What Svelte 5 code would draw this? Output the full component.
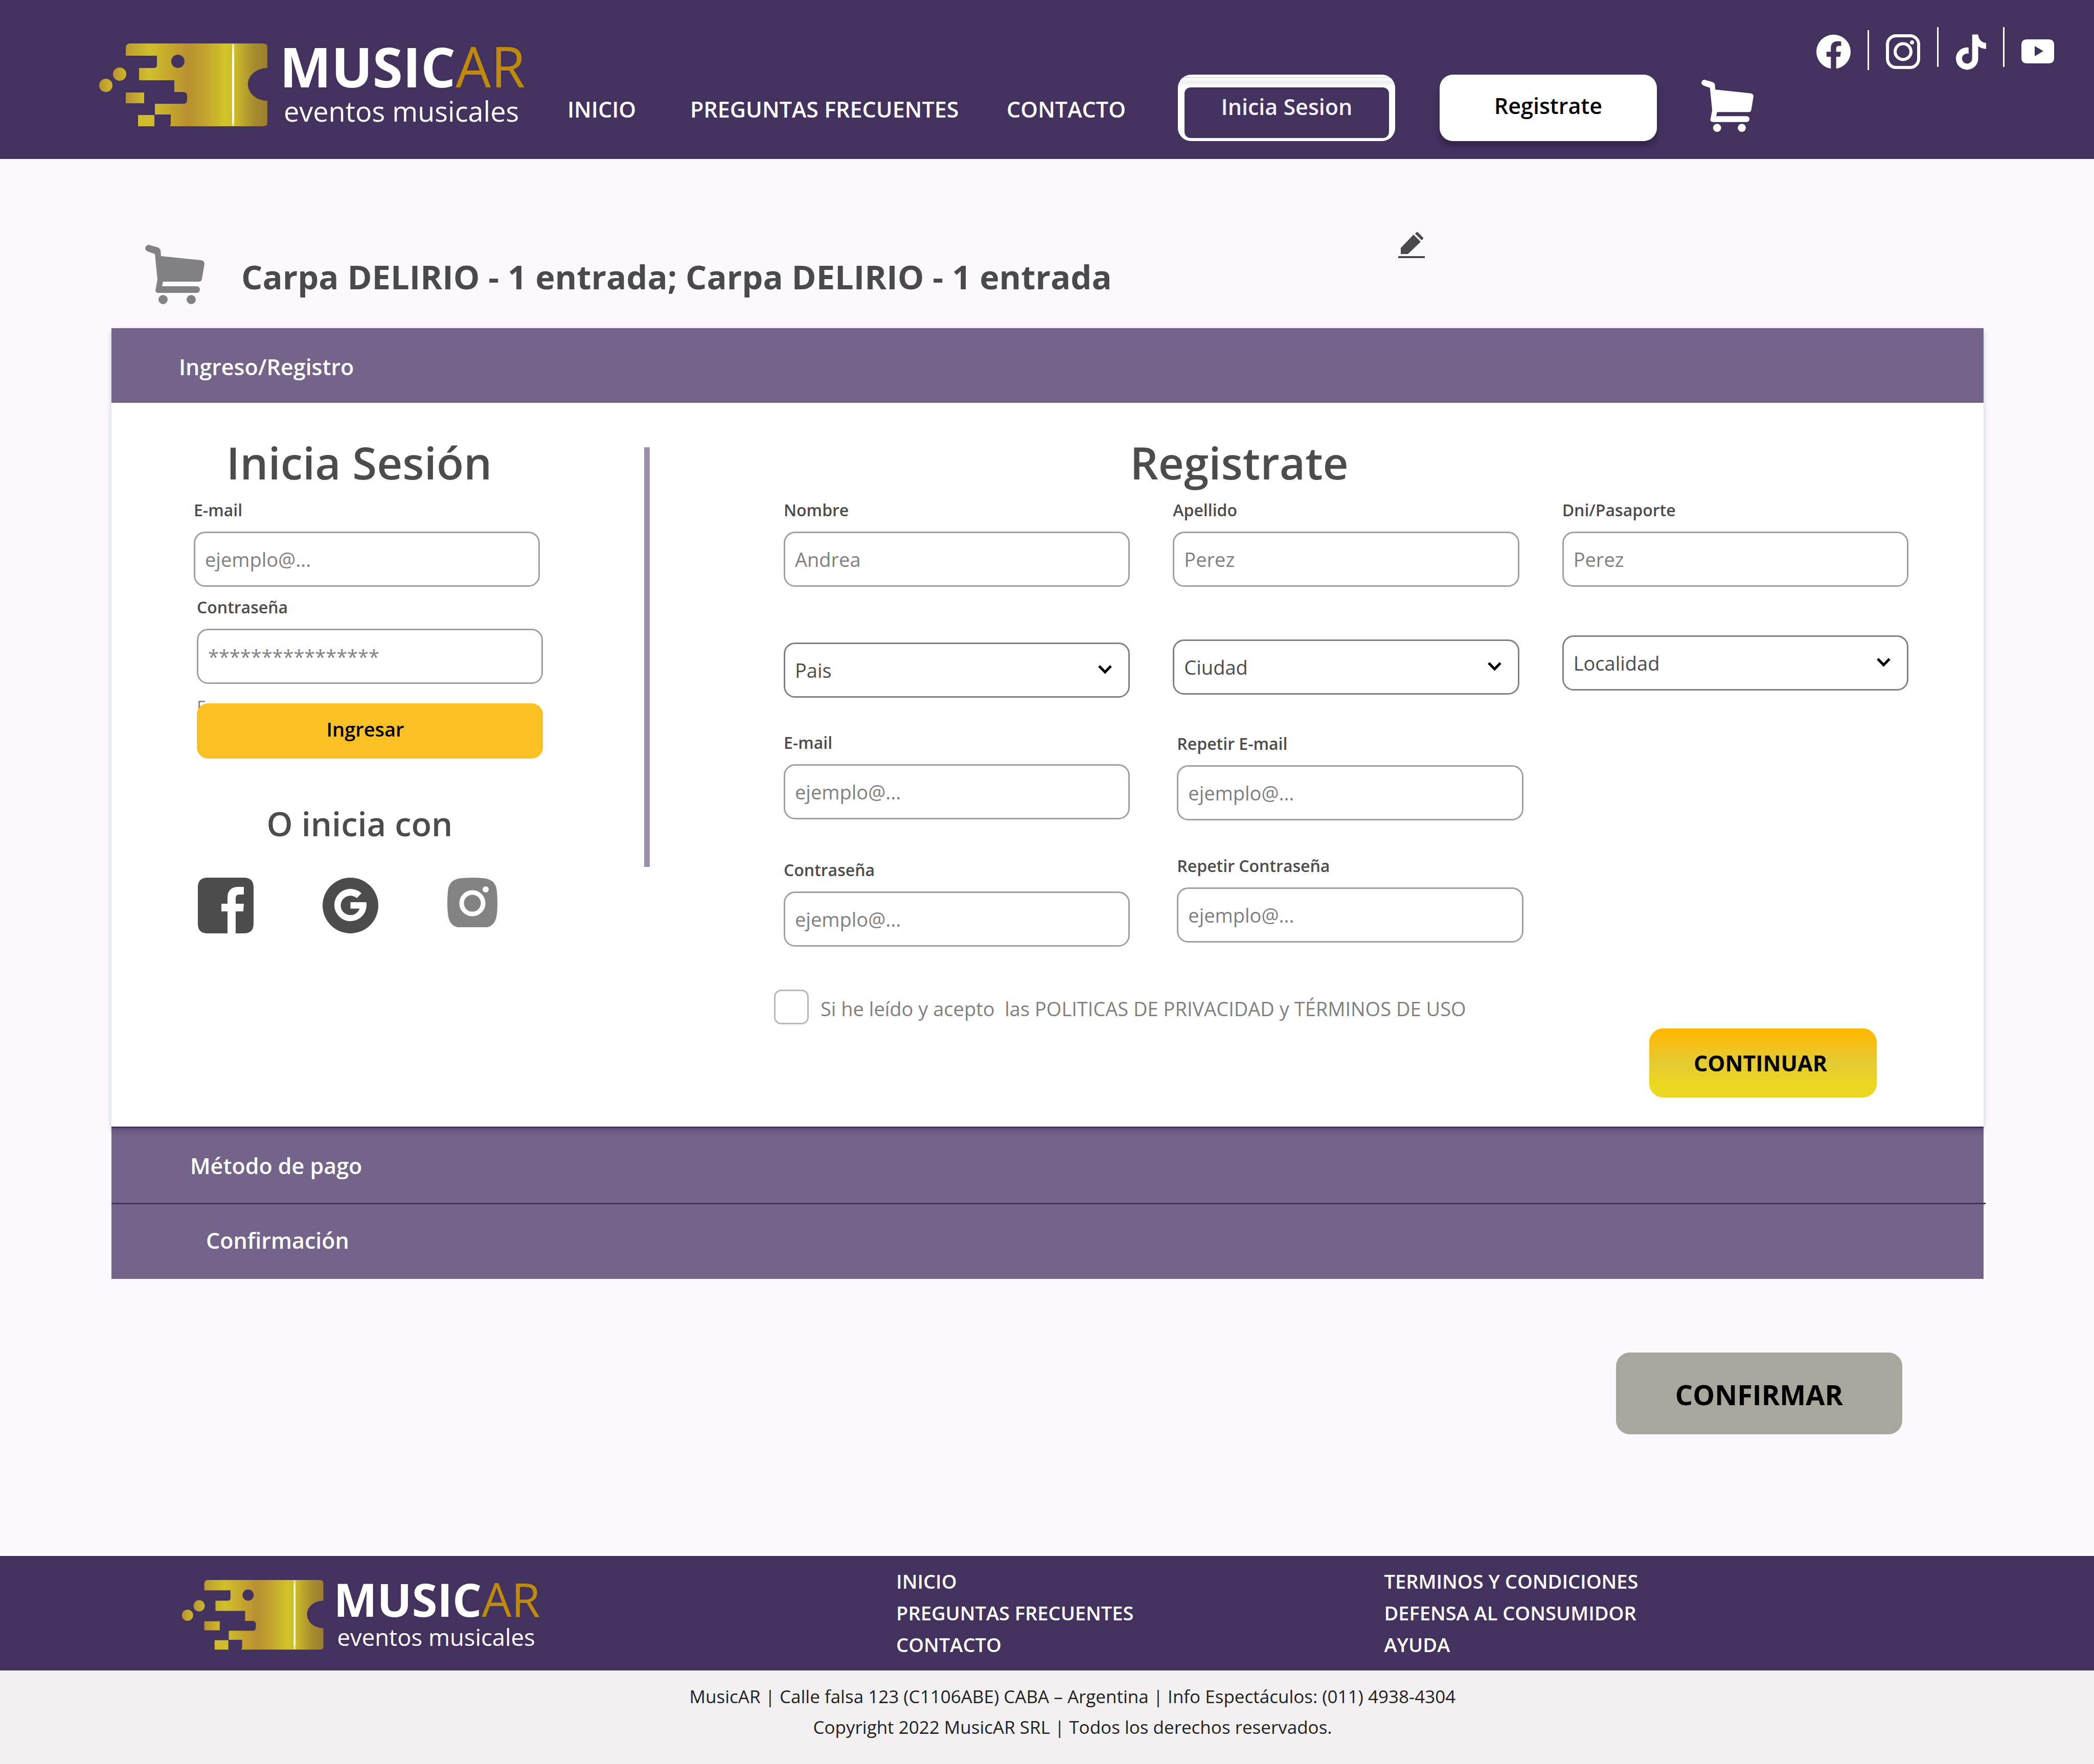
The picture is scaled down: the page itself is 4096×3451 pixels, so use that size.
<script lang="ts">
  const menu = ['INICIO', 'PREGUNTAS FRECUENTES', 'CONTACTO'];
  const legal = ['TERMINOS Y CONDICIONES', 'DEFENSA AL CONSUMIDOR', 'AYUDA'];
</script>

{#snippet logo(id: string)}
  <svg class="logo" viewBox="0 0 850 170" role="img" aria-label="MusicAR eventos musicales">
    <defs>
      <linearGradient id="{id}-gold" gradientUnits="userSpaceOnUse" x1="53" y1="0" x2="330" y2="0">
        <stop offset="0" stop-color="#bb9a30" />
        <stop offset="0.17" stop-color="#d0c02c" />
        <stop offset="0.3" stop-color="#c6a92d" />
        <stop offset="0.44" stop-color="#b89030" />
        <stop offset="0.56" stop-color="#c2a42e" />
        <stop offset="0.7" stop-color="#d2c42a" />
        <stop offset="0.77" stop-color="#ccbc2b" />
        <stop offset="0.9" stop-color="#a88e2e" />
        <stop offset="1" stop-color="#9a7d2e" />
      </linearGradient>
      <linearGradient id="{id}-bit" x1="0" y1="0" x2="1" y2="0">
        <stop offset="0" stop-color="#b8912f" />
        <stop offset="1" stop-color="#cdb92c" />
      </linearGradient>
      <linearGradient id="{id}-line" x1="0" y1="0" x2="0" y2="1">
        <stop offset="0" stop-color="#fff" stop-opacity="0.6" />
        <stop offset="0.15" stop-color="#fff" />
        <stop offset="0.9" stop-color="#fff" />
        <stop offset="1" stop-color="#fff" stop-opacity="0.6" />
      </linearGradient>
    </defs>
    <path
      fill="url(#{id}-gold)"
      fill-rule="evenodd"
      d="M62 0H322Q330 0 330 8V48C309 48 292 62 292 80S309 112 330 112V155Q330 162 322 162H139Q141 160 141 157V139H110V118H166Q173 118 173 110V103Q173 95 165 95H148V72H79V48H108Q114 48 114 42V24H53V9Q53 0 62 0ZM155 22A13 13 0 1 0 155 48A13 13 0 1 0 155 22Z"
    />
    <circle cx="41" cy="60" r="13" fill="url(#{id}-bit)" />
    <circle cx="14" cy="82" r="13" fill="url(#{id}-bit)" />
    <rect x="53" y="96" width="36" height="21" fill="url(#{id}-bit)" />
    <rect x="77" y="140" width="32" height="22" fill="#d0bb2c" />
    <rect x="261" y="1" width="4" height="160" fill="url(#{id}-line)" />
    <text class="brand" x="354" y="86">MUSIC<tspan class="brand-ar">AR</tspan></text>
    <text class="tagline" x="362" y="153">eventos musicales</text>
  </svg>
{/snippet}

{#snippet cart()}
  <svg class="cart" viewBox="0 0 116 117" aria-hidden="true">
    <path
      fill="currentColor"
      d="M7 0L25 5Q29 7 30 10L31 22L109 30Q116 31 116 37L111 67Q110 72 105 72H35L33 81H101Q107 82 107 87Q107 93 101 94H26Q20 94 20 89L24 68L19 18L5 13Q0 11 0 6Q2 0 7 0Z"
    />
    <circle cx="35" cy="107" r="9" fill="currentColor" />
    <circle cx="90" cy="107" r="9" fill="currentColor" />
  </svg>
{/snippet}

{#snippet field(id: string, label: string, placeholder: string, type = 'text')}
  <div class="field">
    <label for={id}>{label}</label>
    <input {id} {type} {placeholder} />
  </div>
{/snippet}

{#snippet picker(label: string)}
  <div class="picker">
    <select aria-label={label}>
      <option>{label}</option>
    </select>
    <svg class="chevron" viewBox="0 0 27 18" aria-hidden="true">
      <path d="M2 2L13.500 14L25 2" fill="none" stroke="#000" stroke-width="5" />
    </svg>
  </div>
{/snippet}

<div class="page">
  <header class="top">
    <a class="home" href="#inicio">{@render logo('head')}</a>
    <nav class="menu">
      {#each menu as item}
        <a href="#{item}">{item}</a>
      {/each}
    </nav>
    <div class="account">
      <button class="signin" type="button"><span>Inicia Sesion</span></button>
      <button class="signup" type="button">Registrate</button>
    </div>
    <a class="cart-link" href="#carrito" aria-label="Carrito">{@render cart()}</a>
    <div class="social">
      <a href="#facebook" aria-label="Facebook">
        <svg width="67" height="68" viewBox="2 2 20 20">
          <path
            fill="#fff"
            d="M12 2.040C6.500 2.040 2 6.530 2 12.060C2 17.060 5.660 21.210 10.440 21.960V14.960H7.900V12.060H10.440V9.850C10.440 7.340 11.930 5.960 14.220 5.960C15.310 5.960 16.450 6.150 16.450 6.150V8.620H15.190C13.950 8.620 13.560 9.390 13.560 10.160V12.060H16.340L15.890 14.960H13.560V21.960A10 10 0 0 0 22 12.060C22 6.530 17.500 2.040 12 2.040Z"
          />
        </svg>
      </a>
      <i class="rule low"></i>
      <a href="#instagram" aria-label="Instagram">
        <svg width="67" height="68" viewBox="0 0 67 68">
          <rect x="3" y="3" width="61" height="62" rx="17" fill="none" stroke="#fff" stroke-width="6" />
          <circle cx="33.500" cy="34" r="15.500" fill="none" stroke="#fff" stroke-width="6" />
          <circle cx="51" cy="16" r="4" fill="#fff" />
        </svg>
      </a>
      <i class="rule"></i>
      <a href="#tiktok" aria-label="TikTok">
        <svg width="60" height="70" viewBox="3.900 3 15.700 18">
          <path
            fill="#fff"
            d="M16.600 5.820A4.278 4.278 0 0 1 15.540 3h-3.090v12.400a2.592 2.592 0 0 1-2.590 2.500c-1.420 0-2.600-1.160-2.600-2.600 0-1.720 1.660-3.010 3.370-2.480V9.660c-3.450-.46-6.470 2.220-6.470 5.640 0 3.330 2.760 5.700 5.690 5.700 3.140 0 5.690-2.550 5.690-5.700V9.010a7.350 7.350 0 0 0 4.300 1.380V7.300s-1.880.09-3.240-1.480z"
          />
        </svg>
      </a>
      <i class="rule"></i>
      <a href="#youtube" aria-label="YouTube">
        <svg width="64" height="68" viewBox="0 0 64 68">
          <path
            fill="#fff"
            fill-rule="evenodd"
            d="M11 10H53Q64 10 64 21V46Q64 57 53 57H11Q0 57 0 46V21Q0 10 11 10ZM26 23V43L43 33Z"
          />
        </svg>
      </a>
    </div>
  </header>

  <main>
    <div class="order">
      {@render cart()}
      <h1>Carpa DELIRIO - 1 entrada; Carpa DELIRIO - 1 entrada</h1>
      <button class="edit" type="button" aria-label="Editar">
        <svg width="52" height="52" viewBox="0 0 52 52">
          <path fill="#4a4a4d" d="M5 31L30 5L44 19L19 43H5ZM33 3L35 1Q37-1 39 1L48 10Q50 12 48 14L46 16Z" />
          <rect x="0" y="47" width="52" height="4" fill="#4a4a4d" />
        </svg>
      </button>
    </div>

    <section class="steps">
      <h2 class="step current">Ingreso/Registro</h2>
      <div class="panel">
        <form class="login">
          <h3>Inicia Sesión</h3>
          {@render field('login-mail', 'E-mail', 'ejemplo@...', 'email')}
          <div class="secret">
            {@render field('login-pass', 'Contraseña', '****************', 'password')}
            <span class="hint">E</span>
            <button class="enter" type="button">Ingresar</button>
          </div>
          <h4>O inicia con</h4>
          <div class="providers">
            <a href="#con-facebook" aria-label="Facebook">
              <svg width="109" height="109" viewBox="0 0 109 109">
                <path
                  fill="#4c4c4c"
                  d="M19 0H90Q109 0 109 19V90Q109 109 90 109H74V66H89L90 51H74V40Q74 33 81 33H90V18Q86 18 80 18Q58 18 58 39V51H46V66H58V109H19Q0 109 0 90V19Q0 0 19 0Z"
                />
              </svg>
            </a>
            <a href="#con-google" aria-label="Google">
              <svg width="109" height="109" viewBox="0 0 109 109">
                <circle cx="54.500" cy="54.500" r="54.500" fill="#4c4c4c" />
                <path
                  fill="#fff"
                  d="M67 40L76 30.500A31.500 31.500 0 1 0 85.500 48H54.500V60.500H72.500A19 19 0 1 1 67 40Z"
                />
              </svg>
            </a>
            <a href="#con-instagram" aria-label="Instagram">
              <svg width="98" height="98" viewBox="0 0 98 98">
                <path
                  fill="#838383"
                  d="M28 1Q49-1 70 1Q96 3 97 28Q99 49 97 70Q95 93 78 97H20Q3 93 1 70Q-1 49 1 28Q2 3 28 1Z"
                />
                <circle cx="49" cy="50" r="21" fill="none" stroke="#fff" stroke-width="9" />
                <circle cx="75" cy="23" r="6" fill="#fff" />
              </svg>
            </a>
          </div>
        </form>

        <div class="divider"></div>

        <form class="register">
          <h3>Registrate</h3>
          <div class="columns">
            <div class="column first">
              {@render field('nombre', 'Nombre', 'Andrea')}
              {@render picker('Pais')}
              <div class="pair">
                {@render field('mail', 'E-mail', 'ejemplo@...', 'email')}
                {@render field('pass', 'Contraseña', 'ejemplo@...', 'password')}
              </div>
            </div>
            <div class="column second">
              {@render field('apellido', 'Apellido', 'Perez')}
              {@render picker('Ciudad')}
              <div class="pair">
                {@render field('mail-again', 'Repetir E-mail', 'ejemplo@...', 'email')}
                {@render field('pass-again', 'Repetir Contraseña', 'ejemplo@...', 'password')}
              </div>
            </div>
            <div class="column third">
              {@render field('dni', 'Dni/Pasaporte', 'Perez')}
              {@render picker('Localidad')}
            </div>
          </div>
          <div class="terms">
            <input id="terms" type="checkbox" />
            <label for="terms">Si he leído y acepto&nbsp; las POLITICAS DE PRIVACIDAD y TÉRMINOS DE USO</label>
          </div>
          <button class="continue" type="button">CONTINUAR</button>
        </form>
      </div>
      <h2 class="step payment">Método de pago</h2>
      <hr />
      <h2 class="step confirmation">Confirmación</h2>
    </section>

    <button class="confirm" type="button">CONFIRMAR</button>
  </main>

  <footer>
    <div class="links">
      <a class="home" href="#inicio">{@render logo('foot')}</a>
      <ul>
        {#each menu as item}
          <li><a href="#{item}">{item}</a></li>
        {/each}
      </ul>
      <ul>
        {#each legal as item}
          <li><a href="#{item}">{item}</a></li>
        {/each}
      </ul>
    </div>
    <div class="copyright">
      <p>MusicAR | Calle falsa 123 (C1106ABE) CABA – Argentina | Info Espectáculos: (011) 4938-4304</p>
      <p>Copyright 2022 MusicAR SRL | Todos los derechos reservados.</p>
    </div>
  </footer>
</div>

<style>
  :global(body) {
    background: #fcfaff;
  }

  .page,
  .page * {
    box-sizing: border-box;
  }

  .page {
    font-family: 'Open Sans', 'Noto Sans', sans-serif;
    font-size: 38px;
    color: #4a4a4d;
    background: #fcfaff;
  }

  h1,
  h2,
  h3,
  h4,
  p,
  ul,
  hr {
    margin: 0;
    padding: 0;
  }

  a {
    color: inherit;
    text-decoration: none;
  }

  button,
  input,
  select {
    font: inherit;
    margin: 0;
  }

  button {
    border: 0;
    padding: 0;
    color: #000;
    cursor: pointer;
  }

  svg {
    display: block;
  }

  .logo {
    overflow: visible;
  }

  .brand {
    font-size: 107px;
    font-weight: 700;
    fill: #fff;
  }

  .brand-ar {
    font-size: 109px;
    font-weight: 400;
    fill: #bf8a0a;
  }

  .tagline {
    font-size: 54px;
    fill: #fff;
  }

  .top {
    display: flex;
    align-items: flex-start;
    height: 311px;
    padding: 0 78px 0 193px;
    background: #43315e;
    color: #fff;
  }

  .top .home {
    width: 850px;
    margin-top: 85px;
  }

  .menu {
    display: flex;
    justify-content: space-between;
    width: 1092px;
    margin: 183px 102px 0 67px;
    font-size: 43px;
    font-weight: 600;
    line-height: 62px;
    white-space: nowrap;
  }

  .menu a:first-child {
    margin-right: 12px;
  }

  .account {
    display: flex;
    gap: 87px;
    margin-top: 146px;
    font-size: 43px;
    font-weight: 600;
  }

  .account button {
    width: 425px;
    height: 130px;
    padding-bottom: 10px;
    border-radius: 26px;
    background: #fff;
  }

  .account .signin {
    padding: 25px 12px 6px 13px;
    background: linear-gradient(#fff 5px, #c9c5d0 5px, #fff 7px, #eeecf0 15px, #fff 24px);
  }

  .signin span {
    display: flex;
    align-items: center;
    justify-content: center;
    height: 100%;
    padding-bottom: 24px;
    border-radius: 12px;
    background: #43315e;
    color: #f4f2f8;
  }

  .signup {
    box-shadow: 0 10px 10px rgba(0, 0, 0, 0.25);
  }

  .cart-link {
    width: 102px;
    margin: 156px 0 0 87px;
  }

  .social {
    display: flex;
    gap: 33px;
    margin: 67px 0 0 auto;
  }

  .rule {
    width: 3px;
    height: 78px;
    margin-top: -14px;
    background: #fff;
  }

  .rule.low {
    margin-top: -8px;
  }

  .order {
    display: flex;
    align-items: flex-start;
    padding: 143px 0 46px 284px;
  }

  .order .cart {
    width: 116px;
    margin: 25px 72px 0 0;
    color: #828284;
  }

  h1 {
    margin-top: 43px;
    font-size: 65px;
    line-height: 88px;
    font-weight: 700;
    white-space: nowrap;
  }

  .edit {
    margin-left: 560px;
    background: none;
  }

  .steps {
    margin: 0 216px 0 218px;
  }

  .step {
    height: 146px;
    background: #746489;
    color: #fff;
    font-size: 43px;
    line-height: 146px;
    font-weight: 600;
  }

  .current {
    padding-left: 132px;
    line-height: 152px;
    box-shadow: 0 4px 10px rgba(0, 0, 0, 0.2);
  }

  .payment {
    padding-left: 154px;
    line-height: 148px;
    background: linear-gradient(#62517a, #746489 16px);
  }

  .confirmation {
    padding-left: 185px;
    line-height: 142px;
  }

  hr {
    height: 3px;
    margin-right: -4px;
    border: 0;
    background: #43315e;
  }

  .panel {
    display: flex;
    align-items: flex-start;
    padding: 56px 147px 57px 161px;
    border-bottom: 3px solid #43315e;
    background: #fff;
    box-shadow: 0 4px 10px rgba(0, 0, 0, 0.2);
  }

  h3 {
    font-size: 87px;
    line-height: 120px;
    font-weight: 600;
    color: #4c4c4c;
    text-align: center;
  }

  h4 {
    margin: 83px 28px 0 0;
    font-size: 65px;
    line-height: 88px;
    font-weight: 600;
    color: #4c4c4c;
    text-align: center;
  }

  .field {
    display: flex;
    flex-direction: column;
    gap: 20px;
  }

  .field label {
    font-size: 32px;
    line-height: 44px;
    font-weight: 600;
    color: #4c4c4c;
  }

  .field input,
  select {
    width: 100%;
    height: 108px;
    padding: 0 19px;
    border: 3px solid #a0a0a0;
    border-radius: 22px;
    background: #fff;
    color: #4c4c4c;
    font-size: 38px;
  }

  .field input::placeholder {
    color: #808080;
    opacity: 1;
  }

  select {
    appearance: none;
    border-color: #808080;
  }

  .picker {
    position: relative;
  }

  .chevron {
    position: absolute;
    top: 44px;
    right: 35px;
    width: 27px;
    pointer-events: none;
  }

  .login {
    width: 677px;
  }

  .login h3 {
    margin: 0 30px 12px 0;
  }

  .secret {
    display: flex;
    flex-direction: column;
    margin: 18px -6px 0 6px;
  }

  .hint {
    margin-top: 23px;
    font-size: 32px;
    line-height: 44px;
    color: #808080;
  }

  .enter {
    position: relative;
    height: 108px;
    margin-top: -29px;
    padding: 0 18px 8px 0;
    border-radius: 22px;
    background: #fac024;
    font-size: 38px;
    font-weight: 600;
  }

  .providers {
    display: flex;
    gap: 135px;
    margin: 62px 0 0 8px;
  }

  .divider {
    width: 11px;
    height: 821px;
    margin: 31px 262px 0 204px;
    background: #9a92ab;
  }

  .register {
    flex: 1;
    display: flex;
    flex-direction: column;
  }

  .register h3 {
    margin-bottom: 12px;
    padding-right: 418px;
  }

  .columns {
    display: grid;
    grid-template-columns: repeat(3, 1fr);
    gap: 84px;
  }

  .column {
    display: flex;
    flex-direction: column;
  }

  .pair {
    display: flex;
    flex-direction: column;
  }

  .first .picker {
    margin: 109px 0 66px;
  }

  .first .pair {
    gap: 77px;
  }

  .second .picker {
    margin: 103px 0 74px;
  }

  .second .pair {
    gap: 67px;
    margin: 0 -8px 0 8px;
  }

  .third .picker {
    margin-top: 95px;
  }

  .terms {
    display: flex;
    align-items: center;
    gap: 23px;
    margin: 84px 0 0 -19px;
  }

  .terms input {
    appearance: none;
    width: 68px;
    height: 68px;
    border: 3px solid #b8b8b8;
    border-radius: 14px;
    background: #fff;
  }

  .terms label {
    padding-top: 6px;
    color: #808080;
    white-space: nowrap;
  }

  .continue {
    align-self: flex-end;
    width: 445px;
    height: 135px;
    margin: 8px 62px 0 0;
    padding-right: 10px;
    border-radius: 27px;
    background: linear-gradient(#ffb800 4%, #e5cb35 50%, #ebd820 82%);
    font-size: 43px;
    font-weight: 700;
  }

  .confirm {
    display: block;
    width: 560px;
    height: 160px;
    margin: 144px 375px 238px auto;
    padding-top: 4px;
    border-radius: 27px;
    background: #a9a69e;
    font-size: 54px;
    font-weight: 700;
  }

  .links {
    display: grid;
    grid-template-columns: 428fr 233fr 339fr;
    padding: 18px 0 20px;
    background: #43315e;
    color: #fff;
  }

  .links .home {
    width: 715px;
    margin: 29px 0 0 355px;
  }

  .links ul {
    list-style: none;
    font-weight: 600;
    line-height: 62px;
  }

  .copyright {
    padding: 21px 0 42px 100px;
    background: #f2f0f1;
    color: #222;
    font-size: 35px;
    line-height: 60px;
    text-align: center;
  }
</style>
